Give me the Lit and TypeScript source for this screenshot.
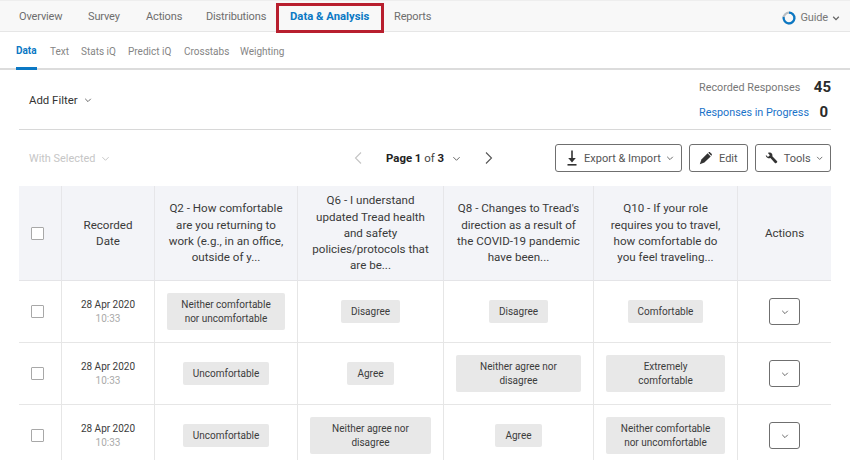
import { LitElement, html, css } from 'lit';
import { customElement } from 'lit/decorators.js';

const chevron = (size = 8, color = '#555', weight = 1.1) => html`<svg class="chev" width=${size} height=${size} viewBox="0 0 10 10" fill="none" stroke=${color} stroke-width=${weight}><path d="M1.5 3.5 5 7l3.5-3.5" /></svg>`;

const rows = [
  { time: '10:33', q2: ['Neither comfortable', 'nor uncomfortable'], q6: ['Disagree'], q8: ['Disagree'], q10: ['Comfortable'] },
  { time: '10:33', q2: ['Uncomfortable'], q6: ['Agree'], q8: ['Neither agree nor', 'disagree'], q10: ['Extremely', 'comfortable'] },
  { time: '10:33', q2: ['Uncomfortable'], q6: ['Neither agree nor', 'disagree'], q8: ['Agree'], q10: ['Neither comfortable', 'nor uncomfortable'] },
];

const headers = [
  ['Recorded', 'Date'],
  ['Q2 - How comfortable', 'are you returning to', 'work (e.g., in an office,', 'outside of y...'],
  ['Q6 - I understand', 'updated Tread health', 'and safety', 'policies/protocols that', 'are be...'],
  ["Q8 - Changes to Tread's", 'direction as a result of', 'the COVID-19 pandemic', 'have been...'],
  ['Q10 - If your role', 'requires you to travel,', 'how comfortable do', 'you feel traveling...'],
  ['Actions'],
];

const lines = (ls: string[]) => ls.map((l, i) => html`${i ? html`<br />` : ''}${l}`);

@customElement('app-root')
export class AppRoot extends LitElement {
  static styles = css`
    :host {
      display: block;
      width: 850px;
      height: 460px;
      overflow: hidden;
      position: relative;
      background: #fff;
      font-family: Roboto, sans-serif;
      color: #32363a;
    }
    .nav {
      display: grid;
      grid-template-columns: 69px 58px 60px 84px 104px 1fr auto;
      align-items: center;
      height: 32px;
      box-sizing: border-box;
      padding-left: 19px;
      background: #f8f8f8;
      border-top: 1px solid #eee;
      border-bottom: 1px solid #e6e6e6;
      font-size: 11px;
      letter-spacing: -0.15px;
      color: #6e6e6e;
    }
    .nav span.tab { white-space: nowrap; }
    .nav .active {
      color: #0b78c4;
      font-weight: 700;
      font-size: 11.3px;
      letter-spacing: 0;
      justify-self: start;
      align-self: stretch;
      display: flex;
      align-items: center;
      border-bottom: 2px solid #0b78c4;
      margin-bottom: -1px;
      padding-top: 1px;
      box-sizing: border-box;
    }
    .guide {
      margin-right: 10px;
      display: flex;
      align-items: center;
      gap: 4px;
      font-size: 11px;
      color: #777;
      padding-top: 3px;
    }
    .red {
      position: absolute;
      left: 276px;
      top: 3px;
      width: 108px;
      height: 30px;
      box-sizing: border-box;
      border: 3px solid #b81f2e;
    }
    .sub {
      display: grid;
      grid-template-columns: 34px 31px 47px 56px 56px auto;
      justify-content: start;
      height: 38px;
      box-sizing: border-box;
      padding-left: 16px;
      align-items: center;
      border-bottom: 2px solid #dcdcdc;
      font-size: 10px;
      color: #858585;
      white-space: nowrap;
    }
    .sub span { padding-top: 2px; }
    .sub .active {
      color: #0b78c4;
      font-weight: 700;
      justify-self: start;
      align-self: stretch;
      display: flex;
      align-items: center;
      border-bottom: 3px solid #0b78c4;
      margin-bottom: -2px;
      padding-top: 2px;
    }
    .filter {
      display: flex;
      justify-content: space-between;
      margin: 0 19px;
      height: 60px;
      box-sizing: border-box;
      border-bottom: 1px solid #d8d8d8;
    }
    .add {
      display: flex;
      align-items: center;
      gap: 6px;
      margin-left: 10px;
      font-size: 11.4px;
      color: #333;
      padding-top: 1px;
    }
    .stats {
      display: grid;
      grid-template-columns: 109px 23px;
      column-gap: 0;
      row-gap: 6px;
      align-content: start;
      padding-top: 8px;
      font-size: 10.8px;
      align-items: center;
      white-space: nowrap;
    }
    .stats .lab { color: #777; }
    .stats .link { color: #1a73c9; }
    .stats b { font-size: 15px; color: #2b2b2b; text-align: right; line-height: 19px; }
    .stats b.zero { padding-right: 3px; }
    .tools {
      display: flex;
      align-items: center;
      height: 56px;
      padding: 0 19px;
    }
    .with {
      display: flex;
      align-items: center;
      gap: 6px;
      margin-left: 10px;
      width: 323px;
      font-size: 10.9px;
      color: #c6c6c6;
    }
    .pager {
      display: flex;
      align-items: center;
      font-size: 11.4px;
      color: #444;
    }
    .pager .num { margin: 0 8px 0 22px; white-space: nowrap; }
    .pager b { color: #222; }
    .pager .next { margin-left: 22px; }
    .btns { display: flex; gap: 7px; margin-left: auto; }
    .btn {
      display: flex;
      align-items: center;
      gap: 5px;
      height: 28px;
      padding-left: 9px;
      box-sizing: border-box;
      border: 1px solid #6f6f6f;
      border-radius: 3px;
      font-size: 11px;
      color: #555;
      white-space: nowrap;
    }
    .btn .chev { margin-left: auto; margin-right: 7px; }
    .export { width: 127px; }
    .edit { width: 59px; gap: 6px; }
    .tool { width: 76px; }
    .table {
      margin: 0 19px;
      display: grid;
      grid-template-columns: 42px 93px 143px 146px 150px 144px 94px;
    }
    .th {
      height: 95px;
      background: #f3f4f8;
      box-sizing: border-box;
      border-left: 1px solid #e6e6e9;
      border-bottom: 1px solid #e4e4e7;
      display: flex;
      align-items: center;
      justify-content: center;
      text-align: center;
      font-size: 11.6px;
      line-height: 16.3px;
      color: #3a3a3a;
    }
    .td {
      height: 62px;
      box-sizing: border-box;
      border-left: 1px solid #e6e6e6;
      border-bottom: 1px solid #e6e6e6;
      display: flex;
      align-items: center;
      justify-content: center;
      text-align: center;
      font-size: 10px;
      line-height: 14px;
      color: #3c3c3c;
      padding: 0 12px;
    }
    .first { border-left: none; justify-content: flex-start; }
    .box {
      width: 11px;
      height: 11px;
      border: 1px solid #a8a8a8;
      background: #fff;
      border-radius: 1px;
    }
    .th.first { padding-left: 12px; }
    .date .time { color: #aaa; }
    .pill {
      background: #e8e8e8;
      border-radius: 2px;
      padding: 4.5px 10px;
      white-space: nowrap;
    }
    .pill.wide { flex: 1; padding: 4.5px 0; }
    .act {
      width: 31px;
      height: 27px;
      flex: none;
      box-sizing: border-box;
      border: 1px solid #6f6f6f;
      border-radius: 3px;
      display: flex;
      align-items: center;
      justify-content: center;
    }
  `;

  pill(ls: string[]) {
    return html`<div class="pill ${ls.length > 1 ? 'wide' : ''}">${lines(ls)}</div>`;
  }

  render() {
    return html`
      <div class="nav">
        <span class="tab">Overview</span>
        <span class="tab">Survey</span>
        <span class="tab">Actions</span>
        <span class="tab">Distributions</span>
        <span class="tab active">Data &amp; Analysis</span>
        <span class="tab">Reports</span>
        <div class="guide">
          <svg width="14" height="14" viewBox="0 0 14 14" fill="none" stroke-width="2.2">
            <circle cx="7" cy="7" r="5.4" stroke="#b9bfc4" />
            <path d="M7 1.6A5.4 5.4 0 1 1 1.7 6" stroke="#0b78c4" />
          </svg>
          Guide ${chevron(8, '#666', 1.6)}
        </div>
      </div>
      <div class="red"></div>
      <div class="sub">
        <span class="active">Data</span><span>Text</span><span>Stats iQ</span><span>Predict iQ</span><span>Crosstabs</span><span>Weighting</span>
      </div>
      <div class="filter">
        <div class="add">Add Filter ${chevron()}</div>
        <div class="stats">
          <span class="lab">Recorded Responses</span><b>45</b>
          <span class="link">Responses in Progress</span><b class="zero">0</b>
        </div>
      </div>
      <div class="tools">
        <div class="with">With Selected ${chevron(9, '#c6c6c6')}</div>
        <div class="pager">
          <svg width="12" height="14" viewBox="0 0 12 14" fill="none" stroke="#c4c4c4" stroke-width="1.1"><path d="M9 1.5 3.5 7 9 12.5" /></svg>
          <span class="num"><b>Page 1</b> of <b>3</b></span>
          ${chevron(9, '#666')}
          <svg class="next" width="12" height="14" viewBox="0 0 12 14" fill="none" stroke="#555" stroke-width="1.1"><path d="M3 1.5 8.5 7 3 12.5" /></svg>
        </div>
        <div class="btns">
          <div class="btn export">
            <svg width="14" height="16" viewBox="0 0 14 16" fill="#333"><rect x="6.2" y="0.5" width="1.6" height="8.5" /><path d="M3.2 8h7.6L7 12.5z" /><rect x="2.5" y="14" width="9" height="1.6" /></svg>
            Export &amp; Import ${chevron()}
          </div>
          <div class="btn edit">
            <svg width="14" height="14" viewBox="0 0 14 14" fill="#333"><path d="M.8 13.2 2.4 8.6 8.6 2.3l3.1 3.1-6.3 6.2z" /><path d="M9.6 1.4c.5-.5 1.1-.5 1.6 0l1.4 1.4c.5.5.5 1.1 0 1.6l-.3.3-3-3z" /></svg>
            Edit
          </div>
          <div class="btn tool">
            <svg width="15" height="14" viewBox="0 0 15 14" fill="#333"><path d="M1 3.6 3.3 5.8 5.3 4 3.2 1.6C4.8.7 6.7 1 7.6 2.3c.6.9.7 1.8.4 2.7l5 5.3c.5.5.5 1.2 0 1.6l-.7.6c-.5.4-1.1.4-1.5-.1L5.9 7.1C4.7 7.6 3.3 7.3 2.2 6.4 1.2 5.6.8 4.6 1 3.6z" /></svg>
            Tools ${chevron()}
          </div>
        </div>
      </div>
      <div class="table">
        <div class="th first"><div class="box"></div></div>
        ${headers.map((h) => html`<div class="th"><div>${lines(h)}</div></div>`)}
        ${rows.map(
          (r) => html`
            <div class="td first"><div class="box"></div></div>
            <div class="td date"><div>28 Apr 2020<br /><span class="time">${r.time}</span></div></div>
            <div class="td">${this.pill(r.q2)}</div>
            <div class="td">${this.pill(r.q6)}</div>
            <div class="td">${this.pill(r.q8)}</div>
            <div class="td">${this.pill(r.q10)}</div>
            <div class="td"><div class="act">${chevron()}</div></div>
          `
        )}
      </div>
    `;
  }
}
